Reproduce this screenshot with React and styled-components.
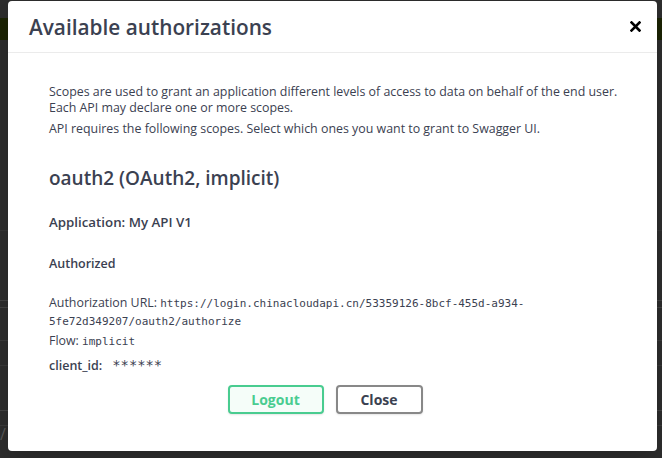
import React from "react";
import styled, { createGlobalStyle } from "styled-components";

const Global = createGlobalStyle`
  html, body { margin: 0; padding: 0; }
  body {
    width: 662px;
    height: 458px;
    overflow: hidden;
    background: #2e2e2e;
    font-family: "Open Sans", "Noto Sans", sans-serif;
  }
`;

const Stage = styled.div`
  position: relative;
  width: 662px;
  height: 458px;
  overflow: hidden;
  background: #2e2e2e;
`;

const Page = styled.div`
  display: flex;
  flex-direction: column;
`;

const Topbar = styled.div`
  margin-top: 18px;
  height: 22px;
  background: #1c2404;
`;

const PageRow = styled.div`
  height: ${(p) => p.$h}px;
  border-bottom: 1px solid ${(p) => p.$line || "#3a3a3a"};
`;

const Slash = styled.div`
  color: #5a5a5a;
  font-size: 16px;
  line-height: 16px;
`;

const Modal = styled.div`
  position: absolute;
  left: 8px;
  top: 1px;
  width: 649px;
  height: 450px;
  background: #fff;
  border-radius: 4px;
  box-shadow: 0 10px 30px rgba(0, 0, 0, 0.2);
  display: flex;
  flex-direction: column;
`;

const Header = styled.div`
  height: 51px;
  border-bottom: 1px solid #ebebeb;
  display: flex;
  align-items: center;
  justify-content: space-between;
  padding: 0 16px 0 21px;
`;

const Title = styled.h3`
  margin: 0;
  font-size: 20.8px;
  font-weight: 600;
  color: #3b4151;
`;

const CloseX = styled.button`
  border: none;
  background: none;
  padding: 0;
  width: 12px;
  height: 12px;
  display: flex;
  align-items: center;
  justify-content: center;
  cursor: pointer;
`;

const Content = styled.div`
  padding: 31px 24px 0 41px;
  color: #3b4151;
`;

const P = styled.p`
  margin: 0 0 ${(p) => p.$mb || 0}px 0;
  font-size: 12.4px;
  line-height: 15.5px;
  color: #3b4151;
`;

const SchemeTitle = styled.h4`
  margin: 29px 0 0 0;
  font-size: 19px;
  font-weight: 600;
  line-height: 24px;
  color: #3b4151;
`;

const AppName = styled.h6`
  margin: 23px 0 0 0;
  font-size: 13.3px;
  font-weight: 600;
  line-height: 18px;
  color: #3b4151;
`;

const Authorized = styled.h6`
  margin: 25px 0 0 0;
  font-size: 12.5px;
  font-weight: 600;
  line-height: 16px;
  color: #3b4151;
`;

const Info = styled.p`
  margin: ${(p) => p.$mt || 0}px 0 0 0;
  font-size: 12.4px;
  line-height: 18px;
  color: #3b4151;
`;

const Code = styled.code`
  font-family: "DejaVu Sans Mono", "Liberation Mono", monospace;
  font-size: 11px;
  line-height: 1;
  color: #3b4151;
`;

const FieldRow = styled.div`
  margin-top: 7px;
  display: flex;
  align-items: baseline;
  gap: 10px;
`;

const Label = styled.span`
  font-size: 12.5px;
  font-weight: 600;
  color: #3b4151;
`;

const Masked = styled.span`
  font-family: "DejaVu Sans Mono", monospace;
  font-size: 13.8px;
  color: #3b4151;
`;

const Buttons = styled.div`
  margin-top: 11px;
  display: flex;
  justify-content: center;
  gap: 12px;
  padding-right: 32px;
`;

const Btn = styled.button`
  width: ${(p) => p.$w}px;
  height: 29px;
  box-sizing: border-box;
  border: 2px solid ${(p) => p.$color};
  border-radius: 4px;
  background: ${(p) => (p.$tint ? "#f5fdf9" : "#fff")};
  color: ${(p) => p.$text};
  font-family: "Open Sans", sans-serif;
  font-size: 14px;
  font-weight: 700;
  padding: 0;
  box-shadow: 0 1px 2px rgba(0, 0, 0, 0.1);
  cursor: pointer;
`;

export default function App() {
  return (
    <>
      <Global />
      <Stage>
        <Page>
          <Topbar />
          <PageRow $h={190} $line="#363636" />
          <PageRow $h={69} $line="#444" />
          <PageRow $h={6} $line="#444" />
          <PageRow $h={32} $line="#3c3c3c" />
          <PageRow $h={24} $line="#3a3a3a" />
          <PageRow $h={44} $line="#444" />
          <PageRow $h={14} $line="#3c3c3c" />
          <Slash>/</Slash>
        </Page>
        <Modal>
          <Header>
            <Title>Available authorizations</Title>
            <CloseX aria-label="close">
              <svg width="11" height="11" viewBox="0 0 11 11">
                <path d="M1.5 1.5 L9.5 9.5 M9.5 1.5 L1.5 9.5" stroke="#000" strokeWidth="2.6" strokeLinecap="square" />
              </svg>
            </CloseX>
          </Header>
          <Content>
            <P $mb={6}>
              Scopes are used to grant an application different levels of access to data on behalf of the end user.
              <br />
              Each API may declare one or more scopes.
            </P>
            <P>API requires the following scopes. Select which ones you want to grant to Swagger UI.</P>
            <SchemeTitle>oauth2 (OAuth2, implicit)</SchemeTitle>
            <AppName>Application: My API V1</AppName>
            <Authorized>Authorized</Authorized>
            <Info $mt={22}>
              Authorization URL: <Code>https://login.chinacloudapi.cn/53359126-8bcf-455d-a934-5fe72d349207/oauth2/authorize</Code>
            </Info>
            <Info $mt={2}>
              Flow: <Code>implicit</Code>
            </Info>
            <FieldRow>
              <Label>client_id:</Label>
              <Masked>******</Masked>
            </FieldRow>
            <Buttons>
              <Btn $w={96} $color="#49cc90" $text="#49cc90" $tint>Logout</Btn>
              <Btn $w={87} $color="#888" $text="#3b4151">Close</Btn>
            </Buttons>
          </Content>
        </Modal>
      </Stage>
    </>
  );
}
